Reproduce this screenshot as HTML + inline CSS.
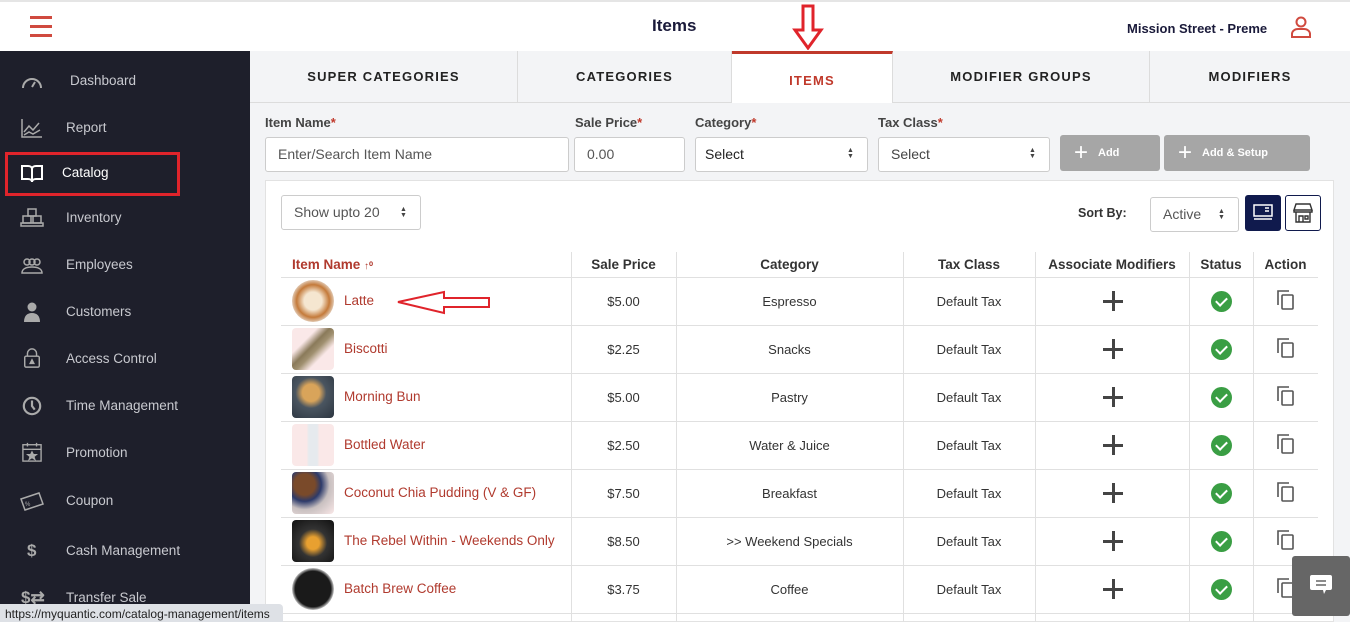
<!DOCTYPE html>
<html><head><meta charset="utf-8"><style>
*{box-sizing:border-box;margin:0;padding:0}
body{width:1350px;height:622px;overflow:hidden;font-family:"Liberation Sans",Arial,sans-serif;background:#f3f4f6;position:relative;font-size:13px;color:#222}
.a{position:absolute}
#hdr{left:0;top:0;width:1350px;height:51px;background:#fff;border-top:2px solid #e5e5e5}
#side{left:0;top:51px;width:250px;height:571px;background:#1e1f2b}
.si{position:absolute;left:66px;color:#c8c9cf;font-size:13.5px}
.ic{position:absolute;left:20px;width:24px;height:20px}
.tab{position:absolute;top:51px;height:52px;border-right:1px solid #dcdcdc;border-bottom:1px solid #dcdcdc;text-align:center;line-height:52px;font-weight:bold;font-size:13px;letter-spacing:1.2px;color:#222;background:#f3f4f6}
.lbl{position:absolute;top:115px;font-size:13px;font-weight:bold;color:#444}
.lbl span{color:#c0392b}
.inp{position:absolute;top:137px;height:35px;background:#fff;border:1px solid #ccc;border-radius:3px;color:#555;font-size:14px;padding-left:12px;line-height:33px}
.btn{position:absolute;top:135px;height:36px;background:#a6a6a6;border-radius:3px;color:#fff;font-weight:bold;font-size:11px;line-height:36px}
.btn b{font-size:24px;font-weight:normal;vertical-align:-4px;margin-right:10px}
#card{left:265px;top:180px;width:1069px;height:442px;background:#fff;border:1px solid #e2e2e2}
.th{position:absolute;top:252px;height:26px;font-weight:bold;font-size:13.5px;color:#333;text-align:center;line-height:26px}
.vl{position:absolute;top:252px;width:1px;height:370px;background:#e0e0e0}
.row{position:absolute;left:281px;width:1037px;height:1px;background:#e0e0e0}
.cell{position:absolute;font-size:13px;color:#333;text-align:center}
.nm{position:absolute;left:344px;color:#b03a2e;font-size:13.5px}
.th2{position:absolute;left:292px;width:42px;height:42px;border-radius:4px}
.chk{position:absolute;left:1211px;width:21px;height:21px;border-radius:50%;background:#3a9e44}
.chk:after{content:"";position:absolute;left:7px;top:4px;width:5px;height:9px;border:solid #fff;border-width:0 2.5px 2.5px 0;transform:rotate(45deg)}
.plus{position:absolute;left:1103px;width:20px;height:20px}
.plus:before{content:"";position:absolute;left:9px;top:0;width:2.5px;height:20px;background:#444}
.plus:after{content:"";position:absolute;left:0;top:9px;width:20px;height:2.5px;background:#444}
.cp{position:absolute;left:1277px;width:18px;height:20px}
</style></head><body>
<div class="a" id="hdr">
 <div class="a" style="left:30px;top:14px;width:22px;height:3px;background:#d04a3f"></div>
 <div class="a" style="left:30px;top:23px;width:22px;height:3px;background:#d04a3f"></div>
 <div class="a" style="left:30px;top:32px;width:22px;height:3px;background:#d04a3f"></div>
 <div class="a" style="left:652px;top:14px;font-size:17px;font-weight:bold;color:#1a1a3a">Items</div>
 <div class="a" style="left:1127px;top:19px;font-size:13px;font-weight:bold;color:#1a1a3a">Mission Street - Preme</div>
 <svg class="a" style="left:1289px;top:13px" width="24" height="24" viewBox="0 0 24 24" fill="none" stroke="#d04a3f" stroke-width="2"><circle cx="12" cy="7" r="4.5"/><path d="M3 22v-3c0-3 3-5 6-5h6c3 0 6 2 6 5v3z"/></svg>
</div>
<div class="a" id="side">
 <div class="a" style="left:5px;top:101px;width:175px;height:44px;border:3px solid #e0242b"></div>
</div>
<svg class="ic" style="top:72px" viewBox="0 0 24 20" fill="none" stroke="#aaa" stroke-width="2"><path d="M3 16a9 9 0 0 1 18 0"/><path d="M12 15l3-5"/></svg><div class="si" style="left:70px;top:73px">Dashboard</div>
<svg class="ic" style="top:118px" viewBox="0 0 24 20" fill="none" stroke="#aaa" stroke-width="1.5"><path d="M2 1v18h20M4 14l5-6 4 4 6-7M4 17l5-3 4 2 7-4"/></svg><div class="si" style="top:120px">Report</div>
<svg class="ic" style="top:163px" viewBox="0 0 24 20" fill="none" stroke="#fff" stroke-width="2"><path d="M2 3h6c2 0 4 1 4 3v13c0-2-2-3-4-3H2zM22 3h-6c-2 0-4 1-4 3v13c0-2 2-3 4-3h6z"/></svg><div class="si" style="left:62px;top:165px;color:#fff">Catalog</div>
<svg class="ic" style="top:208px" viewBox="0 0 24 20" fill="none" stroke="#aaa" stroke-width="1.5"><rect x="8" y="1" width="8" height="7"/><rect x="3" y="8" width="8" height="7"/><rect x="13" y="8" width="8" height="7"/><path d="M1 15h22v3H1z"/></svg><div class="si" style="top:210px">Inventory</div>
<svg class="ic" style="top:256px" viewBox="0 0 24 20" fill="none" stroke="#aaa" stroke-width="1.5"><circle cx="7" cy="6" r="3"/><circle cx="12" cy="6" r="3"/><circle cx="17" cy="6" r="3"/><path d="M2 17c0-4 4-6 10-6s10 2 10 6z"/></svg><div class="si" style="top:257px">Employees</div>
<svg class="ic" style="top:302px" viewBox="0 0 24 20" fill="#aaa"><circle cx="12" cy="5" r="4.5"/><path d="M4 20c0-6 3-9 8-9s8 3 8 9z"/></svg><div class="si" style="top:304px">Customers</div>
<svg class="ic" style="top:348px" viewBox="0 0 24 22" fill="none" stroke="#aaa" stroke-width="1.6"><path d="M7 9V6a5 5 0 0 1 10 0v3"/><rect x="4" y="9" width="16" height="12" rx="1.5"/><path d="M12 13l2 4h-4z" fill="#aaa"/></svg><div class="si" style="top:351px">Access Control</div>
<svg class="ic" style="top:396px" viewBox="0 0 24 22" fill="none" stroke="#aaa" stroke-width="2.4"><circle cx="12" cy="11" r="9"/><path d="M12 5v6l3 4"/></svg><div class="si" style="top:398px">Time Management</div>
<svg class="ic" style="top:442px" viewBox="0 0 24 22" fill="none" stroke="#aaa" stroke-width="1.5"><rect x="2" y="3" width="20" height="18"/><path d="M2 8h20M7 1v4M17 1v4"/><path d="M12 11l1.5 3h3l-2.5 2 1 3-3-2-3 2 1-3-2.5-2h3z" fill="#aaa"/></svg><div class="si" style="top:445px">Promotion</div>
<svg class="ic" style="top:491px" viewBox="0 0 24 20" fill="none" stroke="#aaa" stroke-width="1.5"><path d="M1 8l18-6 4 11-18 6z"/><text x="5" y="15" font-size="6" fill="#aaa" stroke="none" font-family="Liberation Sans">%</text></svg><div class="si" style="top:493px">Coupon</div>
<div class="a" style="left:27px;top:541px;color:#aaa;font-weight:bold;font-size:17px">$</div><div class="si" style="top:543px">Cash Management</div>
<div class="a" style="left:21px;top:588px;color:#aaa;font-weight:bold;font-size:17px">$⇄</div><div class="si" style="top:590px">Transfer Sale</div>

<div class="tab" style="left:250px;width:268px">SUPER CATEGORIES</div>
<div class="tab" style="left:518px;width:214px">CATEGORIES</div>
<div class="tab" style="left:732px;width:161px;background:#fff;border-top:3px solid #c0392b;border-bottom:none;color:#c0392b;line-height:54px">ITEMS</div>
<div class="tab" style="left:893px;width:257px">MODIFIER GROUPS</div>
<div class="tab" style="left:1150px;width:200px;border-right:none">MODIFIERS</div>
<svg class="a" style="left:792px;top:4px" width="32" height="46" viewBox="0 0 32 46" fill="none" stroke="#e0242b" stroke-width="3"><path d="M11 2h10v24h8L16 44 3 26h8z"/></svg>

<div class="lbl" style="left:265px">Item Name<span>*</span></div>
<div class="lbl" style="left:575px">Sale Price<span>*</span></div>
<div class="lbl" style="left:695px">Category<span>*</span></div>
<div class="lbl" style="left:878px">Tax Class<span>*</span></div>
<div class="inp" style="left:265px;width:304px">Enter/Search Item Name</div>
<div class="inp" style="left:574px;width:111px">0.00</div>
<div class="inp" style="left:695px;width:173px;color:#222;padding-left:9px">Select</div>
<div class="inp" style="left:878px;width:172px;color:#444">Select</div>
<div class="a" style="left:847px;top:148px;font-size:7px;line-height:6px;color:#444">▲<br>▼</div>
<div class="a" style="left:1029px;top:148px;font-size:7px;line-height:6px;color:#444">▲<br>▼</div>
<div class="btn" style="left:1060px;width:100px;padding-left:14px"><b>+</b>Add</div>
<div class="btn" style="left:1164px;width:146px;padding-left:14px"><b>+</b>Add &amp; Setup</div>

<div class="a" id="card"></div>
<div class="inp" style="left:281px;top:195px;width:140px;height:35px">Show upto 20</div>
<div class="a" style="left:400px;top:207px;font-size:7px;line-height:6px;color:#444">▲<br>▼</div>
<div class="a" style="left:1078px;top:206px;font-weight:bold;font-size:12.5px;color:#333">Sort By:</div>
<div class="inp" style="left:1150px;top:197px;width:89px;height:35px">Active</div>
<div class="a" style="left:1218px;top:209px;font-size:7px;line-height:6px;color:#444">▲<br>▼</div>
<div class="a" style="left:1245px;top:195px;width:36px;height:36px;background:#101a4d;border-radius:3px"></div>
<svg class="a" style="left:1253px;top:203px" width="20" height="20" viewBox="0 0 20 20" fill="none" stroke="#fff" stroke-width="1.5"><rect x="1" y="2" width="18" height="11"/><path d="M1 16h18M12 5h4M12 8h4"/></svg>
<div class="a" style="left:1285px;top:195px;width:36px;height:36px;border:1.5px solid #101a4d;border-radius:3px;background:#fff"></div>
<svg class="a" style="left:1292px;top:202px" width="22" height="22" viewBox="0 0 22 22" fill="none" stroke="#333" stroke-width="1.4"><path d="M2 8l2-6h14l2 6zM2 8v2h18V8M4 10v10h14V10M7 20v-6h4v6M13 14h3v3h-3z"/></svg>

<div class="th" style="left:292px;color:#b03a2e;text-align:left">Item Name <span style="font-size:10px">↑⁰</span></div>
<div class="th" style="left:571px;width:105px">Sale Price</div>
<div class="th" style="left:676px;width:227px">Category</div>
<div class="th" style="left:903px;width:132px">Tax Class</div>
<div class="th" style="left:1035px;width:154px">Associate Modifiers</div>
<div class="th" style="left:1189px;width:64px">Status</div>
<div class="th" style="left:1253px;width:65px">Action</div>
<div class="vl" style="left:571px"></div><div class="vl" style="left:676px"></div><div class="vl" style="left:903px"></div><div class="vl" style="left:1035px"></div><div class="vl" style="left:1189px"></div><div class="vl" style="left:1253px"></div>
<div class="row" style="top:277px"></div><div class="row" style="top:325px"></div><div class="row" style="top:373px"></div><div class="row" style="top:421px"></div><div class="row" style="top:469px"></div><div class="row" style="top:517px"></div><div class="row" style="top:565px"></div><div class="row" style="top:613px"></div>

<div class="th2" style="top:280px;border-radius:50%;background:radial-gradient(circle,#f5e6d0 0 30%,#c47a3a 55%,#e8dcd0 75%)"></div>
<div class="th2" style="top:328px;background:linear-gradient(135deg,#fae8e8 30%,#8a7a5a 45%,#a09070 55%,#fae8e8 70%)"></div>
<div class="th2" style="top:376px;background:radial-gradient(circle at 45% 40%,#d9a45a 0 25%,#4a5560 45%,#2c3540)"></div>
<div class="th2" style="top:424px;background:linear-gradient(90deg,#fae8e8 35%,#e6eaee 40% 60%,#fae8e8 65%)"></div>
<div class="th2" style="top:472px;background:radial-gradient(circle at 30% 30%,#7a4a2a 0 25%,#2c3a6a 40%,#c8c0c0 60%,#fae8e8)"></div>
<div class="th2" style="top:520px;background:radial-gradient(circle at 50% 55%,#e8a030 0 20%,#333 45%,#111)"></div>
<div class="th2" style="top:568px;border-radius:50%;background:radial-gradient(circle,#1a1a1a 0 60%,#ddd 72%)"></div>

<div class="nm" style="top:293px">Latte</div>
<div class="nm" style="top:341px">Biscotti</div>
<div class="nm" style="top:389px">Morning Bun</div>
<div class="nm" style="top:437px">Bottled Water</div>
<div class="nm" style="top:485px">Coconut Chia Pudding (V &amp; GF)</div>
<div class="nm" style="top:533px">The Rebel Within - Weekends Only</div>
<div class="nm" style="top:581px">Batch Brew Coffee</div>
<svg class="a" style="left:396px;top:290px" width="96" height="25" viewBox="0 0 96 25" fill="none" stroke="#e0242b" stroke-width="2"><path d="M2 12L48 2v6h45v9H48v6z"/></svg>

<div class="cell" style="left:571px;width:105px;top:294px">$5.00</div>
<div class="cell" style="left:571px;width:105px;top:342px">$2.25</div>
<div class="cell" style="left:571px;width:105px;top:390px">$5.00</div>
<div class="cell" style="left:571px;width:105px;top:438px">$2.50</div>
<div class="cell" style="left:571px;width:105px;top:486px">$7.50</div>
<div class="cell" style="left:571px;width:105px;top:534px">$8.50</div>
<div class="cell" style="left:571px;width:105px;top:582px">$3.75</div>
<div class="cell" style="left:676px;width:227px;top:294px">Espresso</div>
<div class="cell" style="left:676px;width:227px;top:342px">Snacks</div>
<div class="cell" style="left:676px;width:227px;top:390px">Pastry</div>
<div class="cell" style="left:676px;width:227px;top:438px">Water &amp; Juice</div>
<div class="cell" style="left:676px;width:227px;top:486px">Breakfast</div>
<div class="cell" style="left:676px;width:227px;top:534px">&gt;&gt; Weekend Specials</div>
<div class="cell" style="left:676px;width:227px;top:582px">Coffee</div>
<div class="cell" style="left:903px;width:132px;top:294px">Default Tax</div>
<div class="cell" style="left:903px;width:132px;top:342px">Default Tax</div>
<div class="cell" style="left:903px;width:132px;top:390px">Default Tax</div>
<div class="cell" style="left:903px;width:132px;top:438px">Default Tax</div>
<div class="cell" style="left:903px;width:132px;top:486px">Default Tax</div>
<div class="cell" style="left:903px;width:132px;top:534px">Default Tax</div>
<div class="cell" style="left:903px;width:132px;top:582px">Default Tax</div>

<div class="plus" style="top:291px"></div><div class="plus" style="top:339px"></div><div class="plus" style="top:387px"></div><div class="plus" style="top:435px"></div><div class="plus" style="top:483px"></div><div class="plus" style="top:531px"></div><div class="plus" style="top:579px"></div>
<div class="chk" style="top:291px"></div><div class="chk" style="top:339px"></div><div class="chk" style="top:387px"></div><div class="chk" style="top:435px"></div><div class="chk" style="top:483px"></div><div class="chk" style="top:531px"></div><div class="chk" style="top:579px"></div>
<svg width="0" height="0" style="position:absolute"><defs><g id="cpy"><path d="M1 15V1h11" fill="none" stroke="#555" stroke-width="1.6"/><rect x="5" y="5" width="11" height="14" rx="1" fill="none" stroke="#555" stroke-width="1.6"/></g></defs></svg>
<svg class="cp" style="top:290px"><use href="#cpy"/></svg><svg class="cp" style="top:338px"><use href="#cpy"/></svg><svg class="cp" style="top:386px"><use href="#cpy"/></svg><svg class="cp" style="top:434px"><use href="#cpy"/></svg><svg class="cp" style="top:482px"><use href="#cpy"/></svg><svg class="cp" style="top:530px"><use href="#cpy"/></svg><svg class="cp" style="top:578px"><use href="#cpy"/></svg>

<div class="a" style="left:1292px;top:556px;width:58px;height:60px;background:#666;border-radius:3px"></div>
<svg class="a" style="left:1309px;top:573px" width="24" height="24" viewBox="0 0 24 24"><path d="M3 2h18a2 2 0 0 1 2 2v11a2 2 0 0 1-2 2h-4l-2 4-1-4H3a2 2 0 0 1-2-2V4a2 2 0 0 1 2-2z" fill="#fff"/><path d="M7 8h10M7 12h10" stroke="#666" stroke-width="1.6"/></svg>

<div class="a" style="left:0;top:604px;width:283px;height:18px;background:#dee1e6;border-radius:0 4px 0 0;font-size:12px;color:#222;padding:3px 0 0 5px;line-height:14px">https://myquantic.com/catalog-management/items</div>
</body></html>
